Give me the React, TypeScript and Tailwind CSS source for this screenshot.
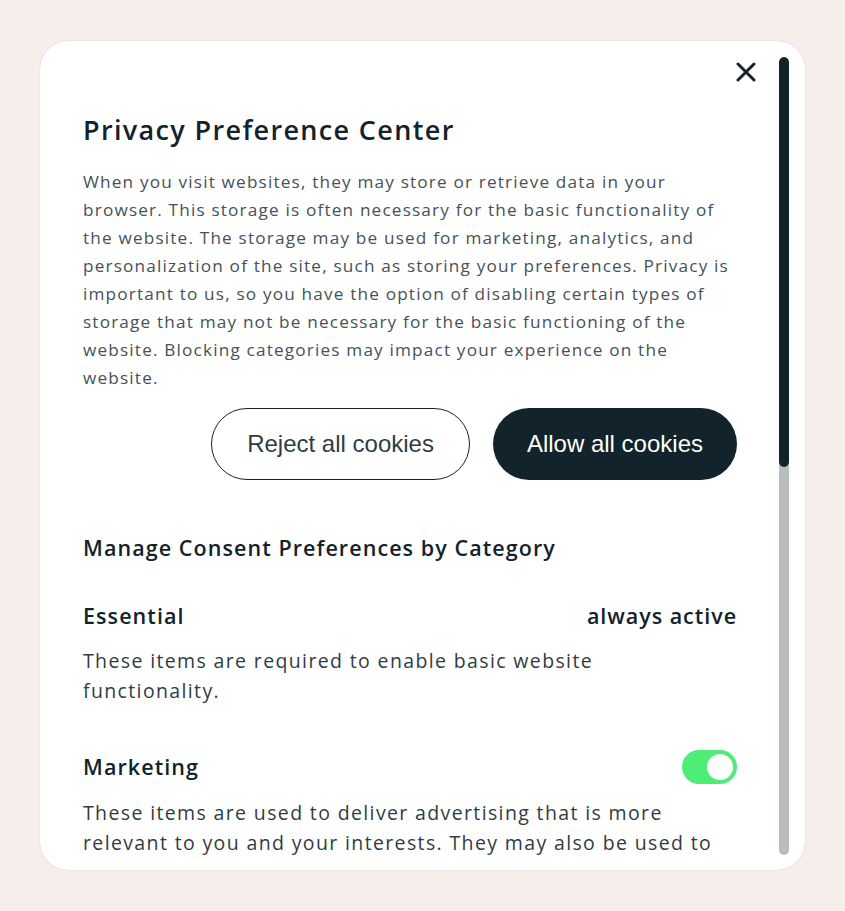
import type { FC } from 'react';

const body = "font-['Open_Sans',sans-serif]";

const categories = [
  {
    name: 'Essential',
    text: 'These items are required to enable basic website functionality.',
    control: 'always',
  },
  {
    name: 'Marketing',
    text: 'These items are used to deliver advertising that is more relevant to you and your interests. They may also be used to limit the number of times you see an advertisement and measure the effectiveness of advertising campaigns.',
    control: 'toggle',
  },
];

const Toggle: FC<{ on: boolean }> = ({ on }) => (
  <div className={`flex h-[34px] w-[55px] items-center rounded-full px-[4px] ${on ? 'justify-end bg-[#4ded78]' : 'justify-start bg-gray-300'}`}>
    <div className="h-[26px] w-[26px] rounded-full bg-white" />
  </div>
);

export default function App() {
  return (
    <div className={`flex min-h-[911px] w-full items-start justify-center bg-[#f5eeeb] pt-[41px] ${body}`}>
      <div className="relative flex h-[829px] w-[765px] overflow-hidden rounded-[28px] bg-white shadow-[0_0_1px_rgba(0,0,0,0.25)]">
        <button className="absolute right-[49px] top-[21px] text-[#13232b]" aria-label="Close">
          <svg width="20" height="20" viewBox="0 0 20 20" fill="none" stroke="currentColor" strokeWidth="3" strokeLinecap="round">
            <path d="M2 2L18 18M18 2L2 18" />
          </svg>
        </button>

        <div className="mb-[14px] flex-1 overflow-hidden pl-[43px] pr-[42px] pt-[72px]">
          <h2 className="text-[27px] font-semibold leading-[34px] tracking-[0.05em] text-[#13232b]">Privacy Preference Center</h2>
          <p className="mt-[21px] max-w-[648px] text-[17.2px] leading-[28px] tracking-[0.068em] text-[#465258]">
            When you visit websites, they may store or retrieve data in your browser. This storage is often necessary for the basic functionality of the website. The storage may be used for marketing, analytics, and personalization of the site, such as storing your preferences. Privacy is important to us, so you have the option of disabling certain types of storage that may not be necessary for the basic functioning of the website. Blocking categories may impact your experience on the website.
          </p>

          <div className="mt-[16px] flex justify-end gap-[23px] font-['Liberation_Sans',Arial,sans-serif] text-[24px]">
            <button className="h-[72px] rounded-full border-[1.5px] border-[#13232b] px-[35px] text-[#2f3d43]">Reject all cookies</button>
            <button className="h-[72px] rounded-full bg-[#13232b] px-[34px] text-white">Allow all cookies</button>
          </div>

          <h3 className="mt-[54px] text-[21.5px] font-semibold leading-[28px] tracking-[0.05em] text-[#13232b]">Manage Consent Preferences by Category</h3>

          <div className="mt-[40px] flex flex-col gap-[44px]">
            {categories.map(cat => (
              <div key={cat.name}>
                <div className="flex items-center justify-between">
                  <h4 className="text-[21.5px] font-semibold leading-[28px] tracking-[0.05em] text-[#13232b]">{cat.name}</h4>
                  {cat.control === 'always' ? (
                    <span className="text-[21.5px] font-semibold leading-[28px] tracking-[0.045em] text-[#13232b]">always active</span>
                  ) : (
                    <Toggle on />
                  )}
                </div>
                <p className={`max-w-[634px] text-[19.5px] leading-[30px] tracking-[0.07em] text-[#2f3d43] ${cat.control === 'always' ? 'mt-[16px]' : 'mt-[14px]'}`}>
                  {cat.text}
                </p>
              </div>
            ))}
          </div>
        </div>

        <div className="mb-[15px] mr-[16px] mt-[16px] flex w-[10px] flex-col overflow-hidden rounded-full bg-[#b8bdc0]">
          <div className="h-[410px] rounded-full bg-[#13232b]" />
        </div>
      </div>
    </div>
  );
}
